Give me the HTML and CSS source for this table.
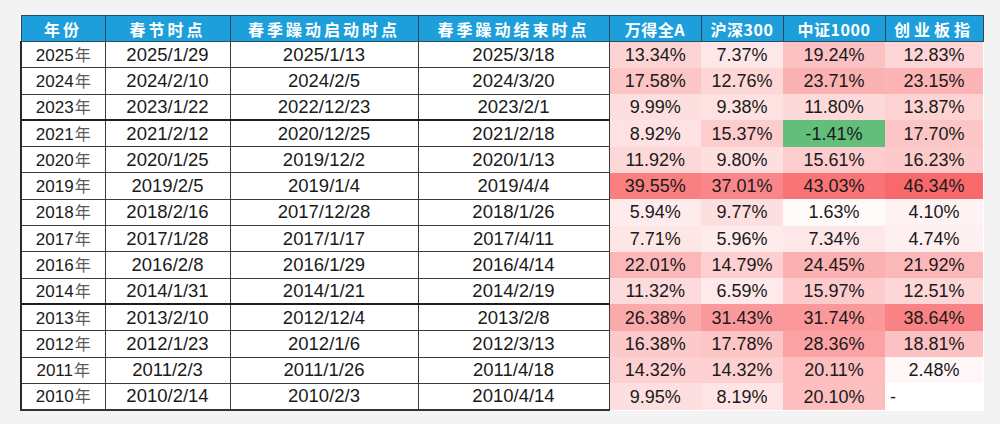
FILE: index.html
```html
<!DOCTYPE html>
<html lang="zh-CN">
<head>
<meta charset="utf-8">
<title>春季躁动</title>
<link rel="stylesheet" href="styles.css">
</head>
<body>
<div class="frame">
<table class="grid">
  <colgroup>
    <col class="w-year"><col class="w-cny"><col class="w-start"><col class="w-end">
    <col class="w-a"><col class="w-b"><col class="w-c"><col class="w-d">
  </colgroup>
  <thead>
    <tr>
      <th class="h-wide">年份</th>
      <th class="h-wide">春节时点</th>
      <th class="h-wide">春季躁动启动时点</th>
      <th class="h-wide">春季躁动结束时点</th>
      <th class="h-tight">万得全A</th>
      <th class="h-tight">沪深300</th>
      <th class="h-tight">中证1000</th>
      <th class="h-wide h-last">创业板指</th>
    </tr>
  </thead>
  <tbody>
    <tr><td class="c yr">2025<span class="nian">年</span></td><td class="c">2025/1/29</td><td class="c">2025/1/13</td><td class="c">2025/3/18</td><td class="p" style="background:#fdd4d4">13.34%</td><td class="p" style="background:#fee7e8">7.37%</td><td class="p" style="background:#fcc1c2">19.24%</td><td class="p" style="background:#fdd5d6">12.83%</td></tr>
    <tr><td class="c yr">2024<span class="nian">年</span></td><td class="c">2024/2/10</td><td class="c">2024/2/5</td><td class="c">2024/3/20</td><td class="p" style="background:#fcc6c7">17.58%</td><td class="p" style="background:#fdd6d6">12.76%</td><td class="p" style="background:#fbb2b3">23.71%</td><td class="p" style="background:#fcb4b5">23.15%</td></tr>
    <tr><td class="c yr">2023<span class="nian">年</span></td><td class="c">2023/1/22</td><td class="c">2022/12/23</td><td class="c">2023/2/1</td><td class="p" style="background:#fddfdf">9.99%</td><td class="p" style="background:#fee1e1">9.38%</td><td class="p" style="background:#fdd9d9">11.80%</td><td class="p" style="background:#fdd2d3">13.87%</td></tr>
    <tr class="sep"><td class="c yr">2021<span class="nian">年</span></td><td class="c">2021/2/12</td><td class="c">2020/12/25</td><td class="c">2021/2/18</td><td class="p" style="background:#fee2e3">8.92%</td><td class="p" style="background:#fdcdce">15.37%</td><td class="p neg">-1.41%</td><td class="p" style="background:#fcc6c6">17.70%</td></tr>
    <tr><td class="c yr">2020<span class="nian">年</span></td><td class="c">2020/1/25</td><td class="c">2019/12/2</td><td class="c">2020/1/13</td><td class="p" style="background:#fdd8d9">11.92%</td><td class="p" style="background:#fedfe0">9.80%</td><td class="p" style="background:#fdcccd">15.61%</td><td class="p" style="background:#fdcacb">16.23%</td></tr>
    <tr><td class="c yr">2019<span class="nian">年</span></td><td class="c">2019/2/5</td><td class="c">2019/1/4</td><td class="c">2019/4/4</td><td class="p" style="background:#f97f81">39.55%</td><td class="p" style="background:#f98789">37.01%</td><td class="p" style="background:#f97476">43.03%</td><td class="p" style="background:#f8696b">46.34%</td></tr>
    <tr><td class="c yr">2018<span class="nian">年</span></td><td class="c">2018/2/16</td><td class="c">2017/12/28</td><td class="c">2018/1/26</td><td class="p" style="background:#feecec">5.94%</td><td class="p" style="background:#fedfe0">9.77%</td><td class="p" style="background:#fffafa">1.63%</td><td class="p" style="background:#fef2f2">4.10%</td></tr>
    <tr><td class="c yr">2017<span class="nian">年</span></td><td class="c">2017/1/28</td><td class="c">2017/1/17</td><td class="c">2017/4/11</td><td class="p" style="background:#fee6e6">7.71%</td><td class="p" style="background:#feecec">5.96%</td><td class="p" style="background:#fee7e8">7.34%</td><td class="p" style="background:#fef0f0">4.74%</td></tr>
    <tr><td class="c yr">2016<span class="nian">年</span></td><td class="c">2016/2/8</td><td class="c">2016/1/29</td><td class="c">2016/4/14</td><td class="p" style="background:#fcb8b9">22.01%</td><td class="p" style="background:#fdcfd0">14.79%</td><td class="p" style="background:#fbb0b1">24.45%</td><td class="p" style="background:#fcb8b9">21.92%</td></tr>
    <tr><td class="c yr">2014<span class="nian">年</span></td><td class="c">2014/1/31</td><td class="c">2014/1/21</td><td class="c">2014/2/19</td><td class="p" style="background:#fddadb">11.32%</td><td class="p" style="background:#feeaea">6.59%</td><td class="p" style="background:#fdcbcc">15.97%</td><td class="p" style="background:#fdd6d7">12.51%</td></tr>
    <tr class="sep"><td class="c yr">2013<span class="nian">年</span></td><td class="c">2013/2/10</td><td class="c">2012/12/4</td><td class="c">2013/2/8</td><td class="p" style="background:#fbaaab">26.38%</td><td class="p" style="background:#fa999b">31.43%</td><td class="p" style="background:#fa989a">31.74%</td><td class="p" style="background:#f98284">38.64%</td></tr>
    <tr><td class="c yr">2012<span class="nian">年</span></td><td class="c">2012/1/23</td><td class="c">2012/1/6</td><td class="c">2012/3/13</td><td class="p" style="background:#fdcacb">16.38%</td><td class="p" style="background:#fcc5c6">17.78%</td><td class="p" style="background:#fba3a4">28.36%</td><td class="p" style="background:#fcc2c3">18.81%</td></tr>
    <tr><td class="c yr">2011<span class="nian">年</span></td><td class="c">2011/2/3</td><td class="c">2011/1/26</td><td class="c">2011/4/18</td><td class="p" style="background:#fdd1d1">14.32%</td><td class="p" style="background:#fdd1d1">14.32%</td><td class="p" style="background:#fcbebf">20.11%</td><td class="p" style="background:#fff7f7">2.48%</td></tr>
    <tr><td class="c yr">2010<span class="nian">年</span></td><td class="c">2010/2/14</td><td class="c">2010/2/3</td><td class="c">2010/4/14</td><td class="p" style="background:#fddfdf">9.95%</td><td class="p" style="background:#fee4e5">8.19%</td><td class="p" style="background:#fcbebf">20.10%</td><td class="p dash">-</td></tr>
  </tbody>
</table>
</div>
</body>
</html>
```

FILE: styles.css
```css
html, body {
  margin: 0;
  padding: 0;
  background: #f3f3f3;
}

body {
  width: 1000px;
  height: 424px;
  overflow: hidden;
  font-family: "Liberation Sans", Arial, "Noto Sans CJK SC", sans-serif;
  color: #1a1a1a;
}

.frame {
  padding: 15px 0 0 20px;
}

.grid {
  border-collapse: collapse;
  table-layout: fixed;
  width: 962px;
  background: #fff;
}

.w-year { width: 84px; }
.w-cny { width: 125px; }
.w-start { width: 188px; }
.w-end { width: 191px; }
.w-a { width: 92px; }
.w-b { width: 82px; }
.w-c { width: 102px; }
.w-d { width: 98px; }

.grid thead tr {
  height: 26px;
}

.grid th {
  background: #1d9fdc;
  color: #fff;
  font-family: "Noto Sans CJK SC", "Liberation Sans", sans-serif;
  font-weight: 700;
  font-size: 16px;
  line-height: 20px;
  padding: 0;
  text-align: center;
  border: 1px solid #2b4a60;
  white-space: nowrap;
}

.h-wide { letter-spacing: 3px; }
.h-tight { letter-spacing: 0.5px; }
.h-last { letter-spacing: 4px; }

.grid tbody tr {
  height: 26.3px;
}

.grid td {
  padding: 0;
  text-align: center;
  white-space: nowrap;
  line-height: 20px;
}

.c {
  border: 1px solid #3a3a3a;
  font-size: 18.5px;
  background: #fff;
}

.grid td.yr {
  border-left: 2px solid #2a2a2a;
  font-size: 17px;
}

.nian {
  font-family: "Noto Sans CJK SC", sans-serif;
  font-size: 16px;
  color: #5a5a5a;
  margin-left: 1px;
}

.grid tr.sep td.c {
  border-top: 2px solid #1e1e1e;
}

.grid tbody tr:last-child td.c {
  border-bottom: 2px solid #333;
}

.p {
  border: none;
  font-size: 18px;
}

.neg {
  background: #63be7b;
}

.grid td.dash {
  background: #fff;
  text-align: left;
  padding-left: 5px;
}
```
